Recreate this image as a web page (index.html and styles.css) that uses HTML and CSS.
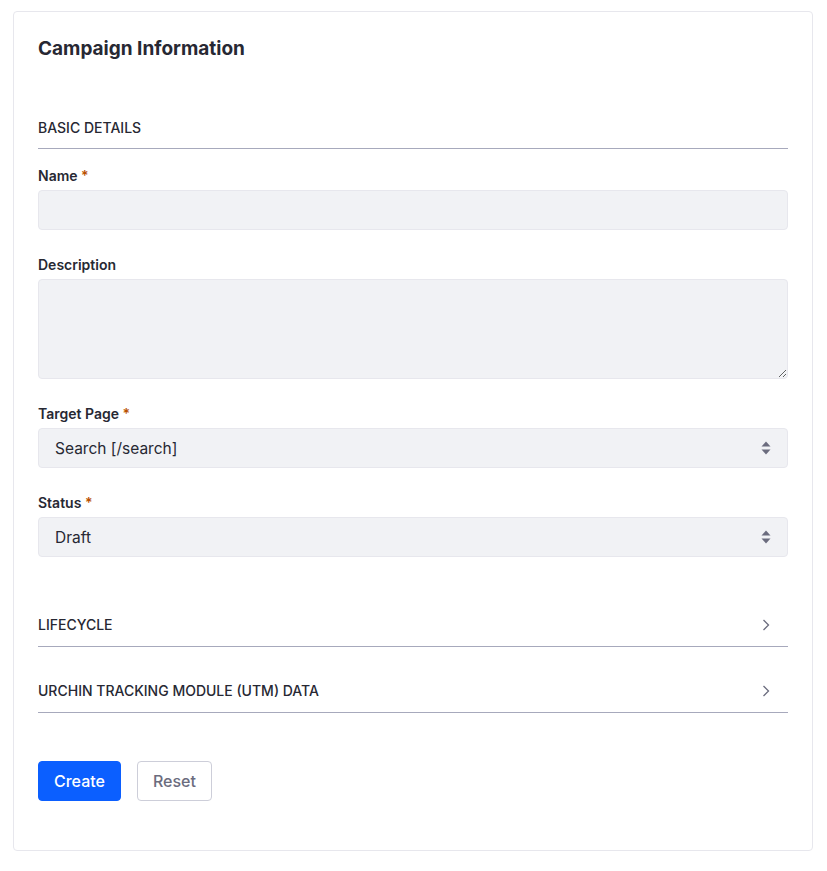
FILE: index.html
```html
<!DOCTYPE html>
<html lang="en">
<head>
<meta charset="utf-8">
<title>Campaign Information</title>
<link rel="stylesheet" href="styles.css">
</head>
<body>
<form class="sheet">
  <h2 class="sheet-title">Campaign Information</h2>

  <div class="sheet-section">
    <h3 class="section-header">Basic Details</h3>

    <div class="form-group">
      <label class="form-label">Name <span class="ref">*</span></label>
      <input class="form-control" type="text">
    </div>

    <div class="form-group">
      <label class="form-label">Description</label>
      <textarea class="form-control textarea"></textarea>
    </div>

    <div class="form-group">
      <label class="form-label">Target Page <span class="ref">*</span></label>
      <div class="select-wrap">
        <select class="form-control select"><option>Search [/search]</option></select>
        <svg class="select-icon" width="10" height="14" viewBox="0 0 10 14"><path d="M5 0.5 L9.5 5.5 H0.5 Z" fill="#6b6c7e"/><path d="M5 13.5 L9.5 8.5 H0.5 Z" fill="#6b6c7e"/></svg>
      </div>
    </div>

    <div class="form-group">
      <label class="form-label">Status <span class="ref">*</span></label>
      <div class="select-wrap">
        <select class="form-control select"><option>Draft</option></select>
        <svg class="select-icon" width="10" height="14" viewBox="0 0 10 14"><path d="M5 0.5 L9.5 5.5 H0.5 Z" fill="#6b6c7e"/><path d="M5 13.5 L9.5 8.5 H0.5 Z" fill="#6b6c7e"/></svg>
      </div>
    </div>
  </div>

  <div class="panel first">
    <div class="panel-header">
      <span>Lifecycle</span>
      <svg width="8" height="12" viewBox="0 0 8 12"><path d="M1.5 1 L6.5 6 L1.5 11" fill="none" stroke="#6b6c7e" stroke-width="1.3"/></svg>
    </div>
  </div>

  <div class="panel">
    <div class="panel-header">
      <span>Urchin Tracking Module (UTM) Data</span>
      <svg width="8" height="12" viewBox="0 0 8 12"><path d="M1.5 1 L6.5 6 L1.5 11" fill="none" stroke="#6b6c7e" stroke-width="1.3"/></svg>
    </div>
  </div>

  <div class="sheet-footer">
    <button type="button" class="btn btn-primary">Create</button>
    <button type="button" class="btn btn-secondary">Reset</button>
  </div>
</form>
</body>
</html>
```

FILE: styles.css
```css
* { box-sizing: border-box; }

html, body {
  margin: 0;
  background: #ffffff;
}

body {
  padding: 11px 14px 0 13px;
  font-family: Inter, "Noto Sans", "Liberation Sans", sans-serif;
  color: #272833;
}

.sheet {
  width: 800px;
  height: 840px;
  border: 1px solid #e7e7ed;
  border-radius: 4px;
  padding: 25px 24px 24px 24px;
}

.sheet-title {
  margin: 0;
  font-size: 19px;
  line-height: 24px;
  font-weight: 700;
  color: #272833;
}

.sheet-section {
  margin-top: 57px;
}

.section-header {
  margin: 0 0 17px;
  font-size: 14px;
  line-height: 20px;
  font-weight: 500;
  text-transform: uppercase;
  padding-bottom: 10px;
  border-bottom: 1px solid #a7a9bc;
  color: #272833;
}

.form-group {
  margin-bottom: 25px;
}

.form-group:last-child {
  margin-bottom: 0;
}

.form-label {
  display: block;
  font-size: 14px;
  line-height: 20px;
  font-weight: 600;
  margin-bottom: 4px;
  color: #272833;
}

.ref {
  color: #b95000;
}

.form-control {
  display: block;
  width: 100%;
  height: 40px;
  background: #f1f2f5;
  border: 1px solid #e7e7ed;
  border-radius: 4px;
  font-family: inherit;
  font-size: 15.5px;
  color: #272833;
  padding: 0 16px;
  outline: none;
}

.textarea {
  height: 100px;
  resize: vertical;
  padding: 8px 16px;
}

.select-wrap {
  position: relative;
}

.select {
  appearance: none;
  -webkit-appearance: none;
  padding-left: 16px;
}

.select-icon {
  position: absolute;
  right: 17px;
  top: 13px;
  pointer-events: none;
}

.panel {
  margin-top: 24px;
}

.panel.first {
  margin-top: 48px;
}

.panel-header {
  display: flex;
  align-items: center;
  justify-content: space-between;
  padding: 10px 18px 11px 0;
  font-size: 14px;
  line-height: 20px;
  font-weight: 500;
  text-transform: uppercase;
  border-bottom: 1px solid #a7a9bc;
}

.sheet-footer {
  display: flex;
  gap: 16px;
  margin-top: 48px;
}

.btn {
  height: 40px;
  border-radius: 4px;
  font-family: inherit;
  font-size: 16px;
  font-weight: 500;
  padding: 0 15px;
  cursor: pointer;
}

.btn-primary {
  background: #0b5fff;
  border: 1px solid #0b5fff;
  color: #ffffff;
}

.btn-secondary {
  background: #ffffff;
  border: 1px solid #cdced9;
  color: #6b6c7e;
}
```
